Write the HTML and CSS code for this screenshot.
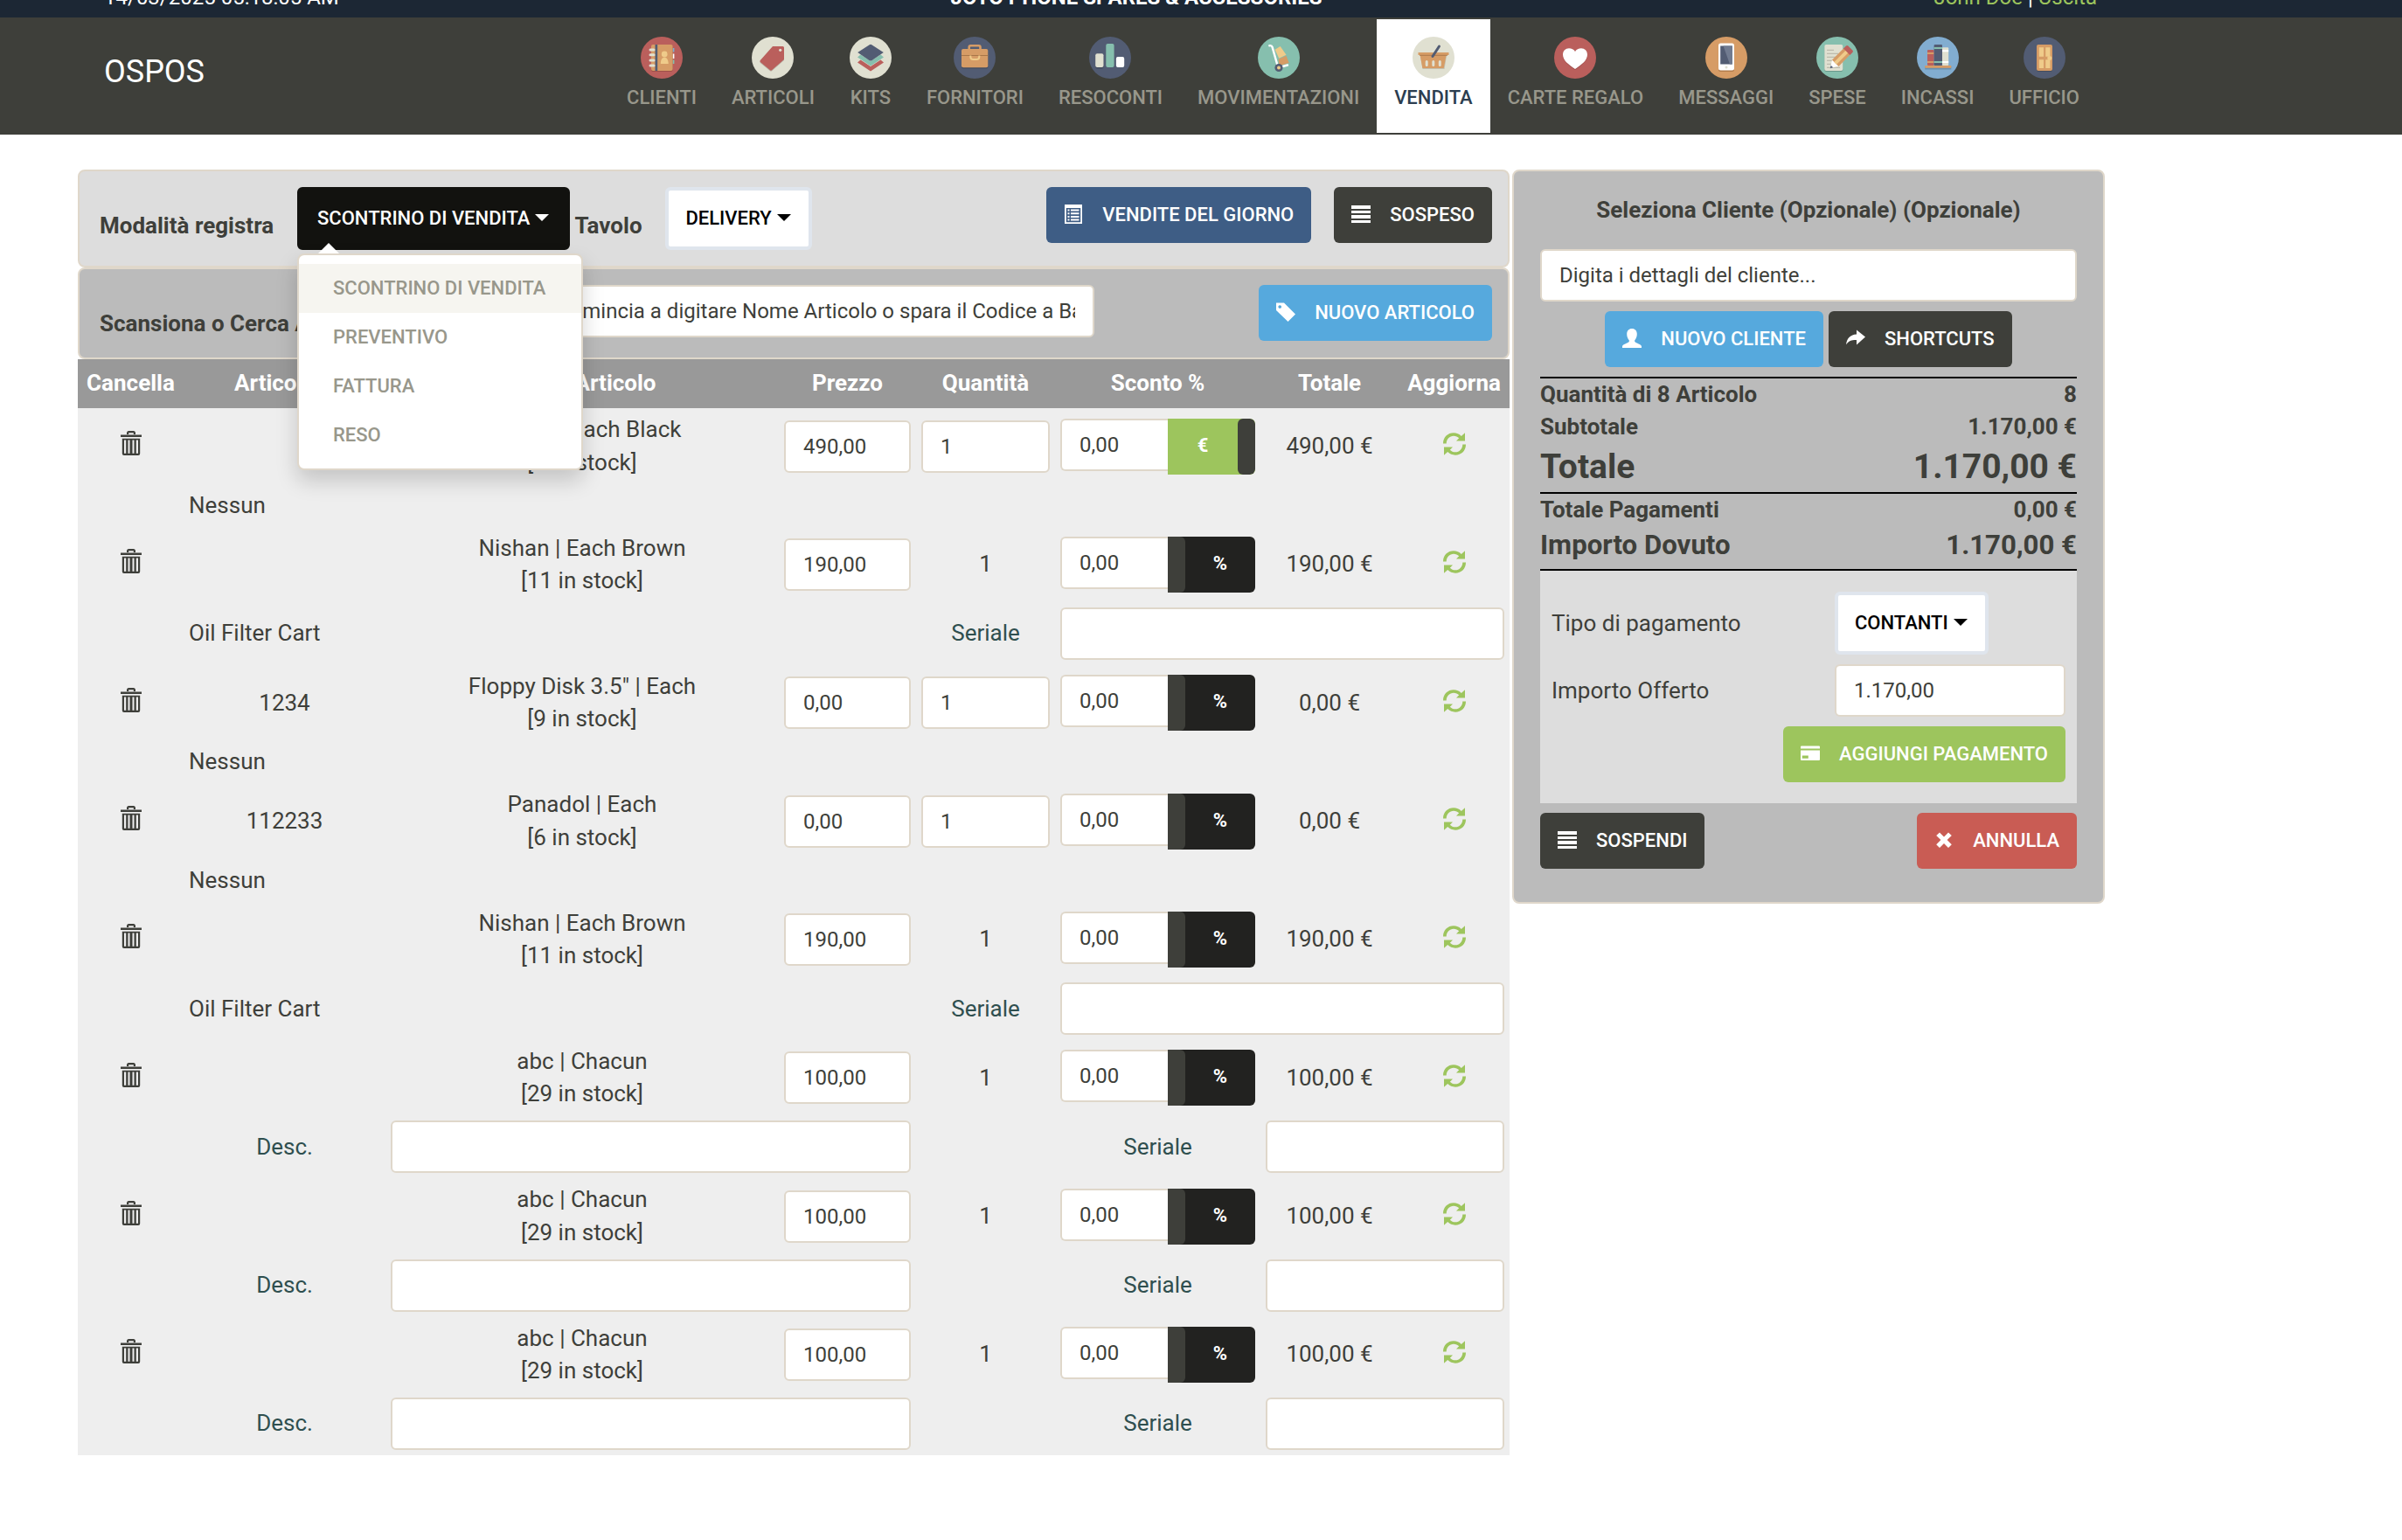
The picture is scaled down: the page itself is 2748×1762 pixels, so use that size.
FILE: index.html
```html
<!DOCTYPE html>
<html lang="it">
<head>
<meta charset="utf-8">
<title>OSPOS</title>
<link rel="stylesheet" href="styles.css">
</head>
<body>
<svg class="defs" width="0" height="0" aria-hidden="true">
  <symbol id="trash" viewBox="0 0 24 28">
    <path d="M0 4.6h24v2.3H0zM7 5V2.6Q7 0 9.400 0h5.200Q17 0 17 2.600V5h-2.200V2.300H9.200V5zM1.800 8.700h20.400V26q0 2-2 2H3.800q-2 0-2-2zM4 10.500v15.300h2.200V10.500zm4.500 0v15.300h2V10.500zm5 0v15.300h2V10.500zm4.300 0v15.300H20V10.500z" fill-rule="evenodd"/>
  </symbol>
  <symbol id="refresh" viewBox="0 0 26 26">
    <path d="M0 12.500C0 5 5.500.3 12 .3c3.400 0 6.500 1.400 8.800 3.600L25 .2V9.500H15l3.200-3.200C16.500 4.600 14.500 3.700 12 3.700c-4.500 0-8.300 3.600-8.300 8.800zM26 13.500c0 7.500-5.500 12.200-12 12.200-3.400 0-6.500-1.400-8.800-3.600L1 25.800V16.500h10l-3.200 3.200c1.700 1.700 3.700 2.600 6.200 2.600 4.500 0 8.300-3.600 8.300-8.800z"/>
  </symbol>
  <symbol id="list" viewBox="0 0 22 22">
    <path d="M0 1h22v4H0zM0 7h22v3H0zM0 12h22v4H0zM0 18h22v3H0z"/>
  </symbol>
  <symbol id="list-alt" viewBox="0 0 22 22">
    <path d="M1 0h20v22H1zM2.800 4v16.200h16.400V4z" fill-rule="evenodd"/>
    <path d="M4.500 5.500h2v2h-2zM8 5.500h9.500v2H8zM4.500 9.200h2v2h-2zM8 9.200h9.500v2H8zM4.500 12.900h2v2h-2zM8 12.900h9.500v2H8zM4.500 16.600h2v2h-2zM8 16.600h9.500v2H8z"/>
  </symbol>
  <symbol id="tag" viewBox="0 0 22 22">
    <path d="M0 0.500H9L22 13.500L13.500 22L0 9zM4.200 3.200a1.800 1.800 0 1 0 .01 0z" fill-rule="evenodd"/>
  </symbol>
  <symbol id="user" viewBox="0 0 22 22">
    <path d="M11 0c3.500 0 5.800 2.500 5.800 6.200 0 3-1.200 5.600-2.600 7v1.800c1.500 1.500 7.800 3 7.800 5.500V22H0v-1.500c0-2.500 6.300-4 7.800-5.500v-1.800c-1.400-1.400-2.600-4-2.600-7C5.200 2.500 7.500 0 11 0z"/>
  </symbol>
  <symbol id="share" viewBox="0 0 22 22">
    <path d="M12 1.500L22 9.500L12 18.500V13C7 12.800 3 13.800 0 18.300C1 10.500 5 7 12 6.500z"/>
  </symbol>
  <symbol id="card" viewBox="0 0 22 22">
    <path d="M1 2.500h20q1 0 1 1V5.500H0V3.500q0-1 1-1zM0 7.500h22v10.500q0 1-1 1H1q-1 0-1-1zM1.800 13.500v3.300h7v-3.300z" fill-rule="evenodd"/>
  </symbol>
  <symbol id="cross" viewBox="0 0 22 22">
    <path d="M6 2.500L11 7.500L16 2.500L19.800 6L14.600 11L19.800 16.300L16 20L11 14.900L6 20L2.200 16.300L7.400 11L2.200 6z"/>
  </symbol>
</svg>

<div class="topbar">
  <span>14/03/2025 05:18:05 AM</span>
  <strong>JOTO PHONE SPARES &amp; ACCESSORIES</strong>
  <span><a href="#">John Doe</a> | <a href="#">Uscita</a></span>
</div>

<nav class="navbar">
  <a class="brand" href="#">OSPOS</a>
  <ul class="modules">
    <li><svg viewBox="0 0 48 48"><circle cx="24" cy="24" r="24" fill="#ba5f5c"/><path d="M36 13h2.400v4.500H36z" fill="#7eaed0"/><path d="M36 19.500h2.400V25H36z" fill="#fff"/><path d="M36 26.500h2.400V31H36z" fill="#86bfae"/><rect x="12" y="10" width="24.600" height="30" rx="2" fill="#9e5148"/><rect x="12" y="9" width="24.600" height="30" rx="2" fill="#d69c66"/><path d="M16.500 9h2.700v30h-2.700z" fill="#525c73"/><path d="M11 15h4M11 20.800h4M11 27h4M11 33h4" stroke="#e0e0d1" stroke-width="3" stroke-linecap="round"/><circle cx="27.200" cy="20" r="3.400" fill="#efcb8a"/><path d="M22.800 31c0-4.500 1.500-7.300 4.400-7.300s4.500 2.800 4.500 7.300z" fill="#efcb8a"/></svg><span>Clienti</span></li>
    <li><svg viewBox="0 0 48 48"><circle cx="24" cy="24" r="24" fill="#e0e0d1"/><path d="M24 12h11.500q1.500 0 1.500 1.500V27L23 39.300q-1 .9-2 0L9.800 30q-.8-1 0-2z" fill="#b9b4a7"/><path d="M24 11h11.500q1.500 0 1.500 1.500V26L23 38.300q-1 .9-2 0L9.800 29q-.8-1 0-2z" fill="#ba5f5c"/><circle cx="32.700" cy="15.300" r="1.600" fill="#e0e0d1"/></svg><span>Articoli</span></li>
    <li><svg viewBox="0 0 48 48"><circle cx="24" cy="24" r="24" fill="#e0e0d1"/><path d="M9 29.500l3.500-3L24 34l11.500-7.500 3.500 3L24 39.500z" fill="#ba5f5c"/><path d="M9 23.500l3.500-3L24 28l11.500-7.500 3.500 3-15 10z" fill="#86bfae"/><path d="M22.700 9.200q1.300-.8 2.600 0L38.800 18 25.300 27.200q-1.300.8-2.600 0L9.200 18z" fill="#525c73"/></svg><span>Kits</span></li>
    <li><svg viewBox="0 0 48 48"><circle cx="24" cy="24" r="24" fill="#525c73"/><rect x="9" y="15.500" width="30.300" height="21" rx="2" fill="#434b5e"/><path d="M17.700 15v-3q0-1.700 1.700-1.700h9.400q1.700 0 1.700 1.700v3" fill="none" stroke="#d69c66" stroke-width="2.600"/><rect x="9" y="14" width="30.300" height="21.300" rx="2" fill="#d69c66"/><path d="M9 21.500h30.300" stroke="#a87648"/><path d="M19.300 21.500v1.500q0 3 3 3h4q3 0 3-3v-1.500" fill="none" stroke="#efcb8a" stroke-width="2"/></svg><span>Fornitori</span></li>
    <li><svg viewBox="0 0 48 48"><circle cx="24" cy="24" r="24" fill="#525c73"/><rect x="7.200" y="19.500" width="9.300" height="17" rx="2" fill="#434b5e"/><rect x="7.200" y="19.300" width="9.300" height="15.700" rx="2" fill="#e0e0d1"/><rect x="19.300" y="8" width="9.300" height="27" rx="2" fill="#86bfae"/><rect x="30.900" y="23" width="9.300" height="12" rx="2" fill="#fff"/></svg><span>Resoconti</span></li>
    <li><svg viewBox="0 0 48 48"><circle cx="24" cy="24" r="24" fill="#86bfae"/><path d="M19.600 14.700L25.700 11l6.800 9.700-8.200 4z" fill="#efcb8a"/><path d="M23.500 25.700l9-4 3.200 8.300-11.100 3.300z" fill="#d69c66"/><path d="M13.300 10.200q2.700-.5 3.200 1.500L22.600 33M25 35l9-2.500" fill="none" stroke="#fff" stroke-width="2.400" stroke-linecap="round"/><circle cx="24" cy="35.500" r="4.600" fill="#525c73"/><circle cx="24" cy="35.500" r="2" fill="#efcb8a"/></svg><span>Movimentazioni</span></li>
    <li class="active"><svg viewBox="0 0 48 48"><circle cx="24" cy="24" r="24" fill="#e0e0d1"/><path d="M9 22h30l-2.500 15H11.500z" fill="#c4bfae"/><path d="M8.600 21h30l-2.900 15H11.400z" fill="#d69c66"/><path d="M6.500 18h35v3h-35z" fill="#d69c66"/><path d="M8 21.300h32" stroke="#a87648" stroke-width=".9"/><path d="M16.200 28.600v4M23.800 28.600v4M31.300 28.600v4" stroke="#e0e0d1" stroke-width="3" stroke-linecap="round"/><path d="M30.500 11l-7.500 11.500" stroke="#525c73" stroke-width="3" stroke-linecap="round"/></svg><span>Vendita</span></li>
    <li><svg viewBox="0 0 48 48"><circle cx="24" cy="24" r="24" fill="#ba5f5c"/><path d="M24 38C16 32.500 10 28 10 21c0-4.500 3-7.600 7-7.600 3 0 5.500 1.200 7 3.800 1.500-2.600 4-3.800 7-3.800 4 0 7 3.100 7 7.600 0 7-6 11.500-14 17z" fill="#9e4d4b"/><path d="M24 37C16 31.500 10 27 10 20.500c0-4.300 3-7.300 7-7.300 3 0 5.500 1.200 7 3.800 1.500-2.600 4-3.800 7-3.800 4 0 7 3 7 7.300C38 27 32 31.500 24 37z" fill="#fff"/></svg><span>Carte Regalo</span></li>
    <li><svg viewBox="0 0 48 48"><circle cx="24" cy="24" r="24" fill="#d69c66"/><rect x="15" y="9" width="18" height="31" rx="2.500" fill="#b27c4c"/><rect x="15" y="7.500" width="18" height="31" rx="2.500" fill="#fff"/><path d="M17.200 10.500h13.600v21H17.200z" fill="#525c73"/><path d="M20.500 10.500h10.300v21H28z" fill="#717b90"/><circle cx="24" cy="35" r="1.500" fill="#e0e0d1"/></svg><span>Messaggi</span></li>
    <li><svg viewBox="0 0 48 48"><circle cx="24" cy="24" r="24" fill="#86bfae"/><rect x="9.300" y="10" width="21" height="30" rx="2" fill="#6b998b"/><rect x="9.300" y="9" width="21" height="30" rx="2" fill="#e0e0d1"/><path d="M12 15.300h8M12 19.300h13M12 23.300h12M12 27.300h8M12 31.300h6M12 35.300h15" stroke="#b4b2a4"/><path d="M16 36l2-9.500 7.500 7z" fill="#fff"/><path d="M15.800 36.300l.8-3.600 2.600 2.500z" fill="#525c73"/><path d="M18 26.500L32 12.500l7.500 7L25.500 34z" fill="#d69c66"/><path d="M20.300 29L34.500 14.800l2.800 2.600L23 31.700z" fill="#efcb8a"/><path d="M31 13.500l3-3q1.200-1.200 2.400 0l5 5q1.200 1.200 0 2.400l-3 3z" fill="#ba5f5c"/></svg><span>Spese</span></li>
    <li><svg viewBox="0 0 48 48"><circle cx="24" cy="24" r="24" fill="#82add0"/><path d="M9.300 34h30v3.500h-30z" fill="#6990b0"/><rect x="12" y="15" width="7.600" height="18" rx="1" fill="#ba5f5c"/><path d="M12 18h7.600v2H12zM12 28h7.600v2H12z" fill="#d69c66"/><rect x="29" y="12.300" width="7.200" height="20.700" rx="1" fill="#e0e0d1"/><path d="M29 15.300h7.200v2H29zM29 28h7.200v2H29z" fill="#fff"/><rect x="19.600" y="9" width="9.400" height="24" rx="1" fill="#525c73"/><path d="M19.600 12h9.400v2h-9.400zM19.600 28h9.400v2h-9.400z" fill="#86bfae"/><path d="M9.300 33h30v2.800h-30z" fill="#d69c66"/></svg><span>Incassi</span></li>
    <li><svg viewBox="0 0 48 48"><circle cx="24" cy="24" r="24" fill="#525c73"/><rect x="15" y="10" width="18" height="30" rx="2" fill="#434b5e"/><rect x="15" y="9" width="18" height="30" rx="2" fill="#d69c66"/><path d="M17.800 12.300H23v10.400h-5.200zM25.300 12.300h5.200v10.400h-5.200zM17.800 26.300H23V36h-5.200zM25.300 26.300h5.200V36h-5.200z" fill="#efcb8a"/><circle cx="29.800" cy="24.500" r="2.500" fill="#efcb8a"/></svg><span>Ufficio</span></li>
  </ul>
</nav>

<main class="page">
  <section class="register">
    <div class="bar bar-mode">
      <label class="mode-label">Modalità registra</label>
      <div class="dropdown">
        <button class="select select-open">Scontrino di vendita<i class="caret"></i></button>
        <ul class="menu">
          <li class="selected">Scontrino di vendita</li>
          <li>Preventivo</li>
          <li>Fattura</li>
          <li>Reso</li>
        </ul>
      </div>
      <label class="table-label">Tavolo</label>
      <button class="select">Delivery<i class="caret"></i></button>
      <div class="actions">
        <button class="btn blue"><svg><use href="#list-alt"/></svg>Vendite del giorno</button>
        <button class="btn dark"><svg><use href="#list"/></svg>Sospeso</button>
      </div>
    </div>
    <div class="bar bar-find">
      <label class="find-label">Scansiona o Cerca Articolo</label>
      <input class="field find" value="Comincia a digitare Nome Articolo o spara il Codice a Barre...">
      <div class="actions">
        <button class="btn sky"><svg><use href="#tag"/></svg>Nuovo articolo</button>
      </div>
    </div>

    <table class="cart">
      <colgroup><col class="c-del"><col class="c-num"><col class="c-name"><col class="c-price"><col class="c-qty"><col class="c-disc"><col class="c-total"><col class="c-upd"></colgroup>
      <thead>
        <tr><th>Cancella</th><th>Articolo #</th><th>Nome Articolo</th><th>Prezzo</th><th>Quantità</th><th>Sconto %</th><th>Totale</th><th>Aggiorna</th></tr>
      </thead>
      <tbody>
        <tr class="item"><td><svg class="trash"><use href="#trash"/></svg></td><td></td><td>Nishan | Each Black<br>[9 in stock]</td><td><input class="field" value="490,00"></td><td><input class="field" value="1"></td><td><div class="discount"><input class="field" value="0,00"><span class="toggle on"><b>€</b><i></i></span></div></td><td>490,00 €</td><td><svg class="refresh"><use href="#refresh"/></svg></td></tr>
        <tr><td></td><td class="note" colspan="7">Nessun</td></tr>

        <tr class="item"><td><svg class="trash"><use href="#trash"/></svg></td><td></td><td>Nishan | Each Brown<br>[11 in stock]</td><td><input class="field" value="190,00"></td><td>1</td><td><div class="discount"><input class="field" value="0,00"><span class="toggle"><i></i><b>%</b></span></div></td><td>190,00 €</td><td><svg class="refresh"><use href="#refresh"/></svg></td></tr>
        <tr><td></td><td class="note" colspan="3">Oil Filter Cart</td><td class="key">Seriale</td><td colspan="3"><input class="field"></td></tr>

        <tr class="item"><td><svg class="trash"><use href="#trash"/></svg></td><td>1234</td><td>Floppy Disk 3.5" | Each<br>[9 in stock]</td><td><input class="field" value="0,00"></td><td><input class="field" value="1"></td><td><div class="discount"><input class="field" value="0,00"><span class="toggle"><i></i><b>%</b></span></div></td><td>0,00 €</td><td><svg class="refresh"><use href="#refresh"/></svg></td></tr>
        <tr><td></td><td class="note" colspan="7">Nessun</td></tr>

        <tr class="item"><td><svg class="trash"><use href="#trash"/></svg></td><td>112233</td><td>Panadol | Each<br>[6 in stock]</td><td><input class="field" value="0,00"></td><td><input class="field" value="1"></td><td><div class="discount"><input class="field" value="0,00"><span class="toggle"><i></i><b>%</b></span></div></td><td>0,00 €</td><td><svg class="refresh"><use href="#refresh"/></svg></td></tr>
        <tr><td></td><td class="note" colspan="7">Nessun</td></tr>

        <tr class="item"><td><svg class="trash"><use href="#trash"/></svg></td><td></td><td>Nishan | Each Brown<br>[11 in stock]</td><td><input class="field" value="190,00"></td><td>1</td><td><div class="discount"><input class="field" value="0,00"><span class="toggle"><i></i><b>%</b></span></div></td><td>190,00 €</td><td><svg class="refresh"><use href="#refresh"/></svg></td></tr>
        <tr><td></td><td class="note" colspan="3">Oil Filter Cart</td><td class="key">Seriale</td><td colspan="3"><input class="field"></td></tr>

        <tr class="item"><td><svg class="trash"><use href="#trash"/></svg></td><td></td><td>abc | Chacun<br>[29 in stock]</td><td><input class="field" value="100,00"></td><td>1</td><td><div class="discount"><input class="field" value="0,00"><span class="toggle"><i></i><b>%</b></span></div></td><td>100,00 €</td><td><svg class="refresh"><use href="#refresh"/></svg></td></tr>
        <tr><td></td><td class="key">Desc.</td><td colspan="2"><input class="field"></td><td></td><td class="key">Seriale</td><td colspan="2"><input class="field"></td></tr>

        <tr class="item"><td><svg class="trash"><use href="#trash"/></svg></td><td></td><td>abc | Chacun<br>[29 in stock]</td><td><input class="field" value="100,00"></td><td>1</td><td><div class="discount"><input class="field" value="0,00"><span class="toggle"><i></i><b>%</b></span></div></td><td>100,00 €</td><td><svg class="refresh"><use href="#refresh"/></svg></td></tr>
        <tr><td></td><td class="key">Desc.</td><td colspan="2"><input class="field"></td><td></td><td class="key">Seriale</td><td colspan="2"><input class="field"></td></tr>

        <tr class="item"><td><svg class="trash"><use href="#trash"/></svg></td><td></td><td>abc | Chacun<br>[29 in stock]</td><td><input class="field" value="100,00"></td><td>1</td><td><div class="discount"><input class="field" value="0,00"><span class="toggle"><i></i><b>%</b></span></div></td><td>100,00 €</td><td><svg class="refresh"><use href="#refresh"/></svg></td></tr>
        <tr><td></td><td class="key">Desc.</td><td colspan="2"><input class="field"></td><td></td><td class="key">Seriale</td><td colspan="2"><input class="field"></td></tr>
      </tbody>
    </table>
  </section>

  <aside class="sale">
    <h2>Seleziona Cliente (Opzionale) (Opzionale)</h2>
    <input class="field" value="Digita i dettagli del cliente...">
    <div class="customer-actions">
      <button class="btn sky"><svg><use href="#user"/></svg>Nuovo cliente</button>
      <button class="btn dark"><svg><use href="#share"/></svg>Shortcuts</button>
    </div>
    <dl class="totals">
      <div><dt>Quantità di 8 Articolo</dt><dd>8</dd></div>
      <div><dt>Subtotale</dt><dd>1.170,00 €</dd></div>
      <div class="grand"><dt>Totale</dt><dd>1.170,00 €</dd></div>
    </dl>
    <dl class="totals">
      <div><dt>Totale Pagamenti</dt><dd>0,00 €</dd></div>
      <div class="due"><dt>Importo Dovuto</dt><dd>1.170,00 €</dd></div>
    </dl>
    <div class="payment">
      <div class="line"><span>Tipo di pagamento</span><button class="select">Contanti<i class="caret"></i></button></div>
      <div class="line amount"><span>Importo Offerto</span><input class="field" value="1.170,00"></div>
      <button class="btn green"><svg><use href="#card"/></svg>Aggiungi pagamento</button>
    </div>
    <div class="sale-actions">
      <button class="btn dark"><svg><use href="#list"/></svg>Sospendi</button>
      <button class="btn red"><svg><use href="#cross"/></svg>Annulla</button>
    </div>
  </aside>
</main>
</body>
</html>
```

FILE: styles.css
```css
* { box-sizing: border-box; }

body {
  margin: 0;
  background: #fff;
  color: #3e3f3a;
  font: 26px/37.14px Roboto, "Liberation Sans", sans-serif;
}

ul, dl, dd, h2 { margin: 0; padding: 0; list-style: none; }
.defs { display: block; }
button, input { font-family: inherit; }

/* Top strip */
.topbar {
  display: flex;
  justify-content: space-between;
  align-items: flex-end;
  height: 20px;
  padding: 0 349px 4px 119px;
  overflow: hidden;
  background: #1c2734;
  color: #fff;
  font-size: 24px;
  white-space: nowrap;
}
.topbar a { color: #9dc55d; text-decoration: none; }

/* Module navigation */
.navbar {
  display: flex;
  justify-content: space-between;
  height: 134px;
  padding: 2px 349px 2px 119px;
  background: #3e3f3a;
}
.brand {
  padding-top: 40px;
  color: #fff;
  font-size: 36px;
  line-height: 40px;
  text-decoration: none;
}
.modules { display: flex; }
.modules li {
  display: flex;
  flex-direction: column;
  align-items: center;
  gap: 10px;
  padding: 20px 20px 0;
  color: #98978b;
  font-size: 22px;
  font-weight: 500;
  line-height: 24px;
  text-transform: uppercase;
}
.modules svg { width: 48px; height: 48px; }
.modules .active { background: #fff; color: #2c3e50; }

.page {
  display: flex;
  align-items: flex-start;
  gap: 3px;
  padding: 40px 0 0 89px;
}

/* Shared controls */
.btn {
  display: inline-flex;
  align-items: center;
  height: 64px;
  padding: 0 20px;
  border: 0;
  border-radius: 6px;
  color: #fff;
  font-size: 22px;
  font-weight: 500;
  line-height: 32px;
  text-transform: uppercase;
  white-space: nowrap;
}
.btn svg { width: 22px; height: 22px; margin: -2px 22px 0 0; fill: currentColor; }
.blue { background: #3e5d85; }
.dark { background: #3e3f3a; }
.sky { background: #56a9dd; }
.green { background: #9dc55d; }
.red { background: #c95c54; }

.select {
  display: inline-flex;
  align-items: center;
  height: 72px;
  padding: 0 20px 2px 19px;
  border: 4px solid #dfe5ed;
  border-radius: 6px;
  background: #fff;
  color: #000;
  font-size: 22px;
  font-weight: 500;
  text-transform: uppercase;
  white-space: nowrap;
}
.select-open { border-color: #12120f; background: #12120f; color: #fff; }
.caret {
  margin-left: 6px;
  border: 8px solid transparent;
  border-top-color: currentColor;
  border-bottom: 0;
}

.field {
  display: block;
  width: 100%;
  height: 60px;
  padding: 0 20px;
  border: 2px solid #dfd7ca;
  border-radius: 6px;
  outline: 0;
  background: #fff;
  color: #3e3f3a;
  font-size: 24px;
}

/* Register */
.register { width: 1638px; }
.bar {
  display: flex;
  align-items: flex-start;
  padding: 18px 18px 0 23px;
  border: 2px solid #dfd7ca;
  border-radius: 8px;
  font-weight: 700;
}
.bar-mode { height: 112px; background: #ddd; }
.bar-find { height: 104.700px; background: #bbb; }
.bar label { flex: none; margin-top: 25.500px; white-space: nowrap; }
.mode-label { width: 226px; }
.table-label { width: 109px; padding-left: 5px; }
.find-label { width: 501px; }
.find { width: 637px; }
.actions { display: flex; gap: 26px; margin-left: auto; }

.dropdown { position: relative; }
.menu {
  position: absolute;
  z-index: 2;
  top: 76px;
  left: 0;
  width: 327px;
  padding: 10px 0;
  border: 2px solid #dfd7ca;
  border-radius: 8px;
  background: #fff;
  box-shadow: 0 12px 24px rgba(0, 0, 0, .175);
  color: #98978b;
  font-size: 22px;
  font-weight: 500;
  text-transform: uppercase;
}
.menu::before {
  content: "";
  position: absolute;
  top: -14px;
  left: 22px;
  border: 12px solid transparent;
  border-top: 0;
  border-bottom-color: #fff;
}
.menu li { height: 56px; padding-left: 39px; line-height: 55px; }
.menu .selected { background: #f6f5f0; }

.cart {
  width: 1638px;
  table-layout: fixed;
  border-collapse: collapse;
  background: #eee;
  text-align: center;
}
.c-del { width: 121px; }
.c-num { width: 231px; }
.c-name { width: 450px; }
.c-price { width: 157px; }
.c-qty { width: 159px; }
.c-disc { width: 235px; }
.c-total { width: 158px; }
.c-upd { width: 127px; }
.cart th {
  height: 56.700px;
  padding: 0;
  background: #999;
  color: #fff;
  font-weight: 700;
}
.cart td { padding: 6px; }
.cart .item td { height: 86.280px; padding: 0 6px; }
.cart .note { text-align: left; }
.cart .key { color: #2f4f4f; }
.trash { display: block; width: 24px; height: 28px; margin: -7px auto 0; fill: #3e3f3a; }
.refresh { display: block; width: 26px; height: 26px; margin: -5px auto 0; fill: #9dc55d; }

.discount { display: flex; align-items: flex-start; }
.discount .field { width: 123px; border-right: 0; border-radius: 6px 0 0 6px; }
.toggle {
  display: flex;
  width: 100px;
  height: 64px;
  border-radius: 0 6px 6px 0;
  overflow: hidden;
  background: linear-gradient(#3e3f3a, #3e3f3a) 0 0 / 12px 100% no-repeat #222220;
  color: #fff;
  font-size: 22px;
  line-height: 62px;
}
.toggle b { width: 80px; }
.toggle i { width: 20px; background: #3e3f3a; border-radius: 0 6px 6px 0; }
.toggle.on { background: #9dc55d; }
.toggle.on i { border-radius: 6px; }

/* Sale summary */
.sale {
  width: 678px;
  height: 840px;
  padding: 26px 30px 0;
  border: 2px solid #dfd7ca;
  border-radius: 8px;
  background: #bbb;
}
.sale h2 { margin-bottom: 25.600px; font-size: 26px; font-weight: 700; text-align: center; }
.customer-actions { display: flex; justify-content: center; gap: 6px; margin: 11px 0; }

.totals { border-top: 2px solid #000; font-weight: 700; }
.totals div { display: flex; justify-content: space-between; }
.totals .grand { height: 55.700px; font-size: 39px; line-height: 55px; }
.totals .due { height: 49.500px; font-size: 31.200px; line-height: 43px; }

.payment {
  display: flex;
  flex-direction: column;
  height: 268px;
  padding: 24px 13px 0;
  border-top: 2px solid #000;
  background: #ddd;
}
.line { display: flex; align-items: center; }
.line span { width: 324px; }
.line .field { width: 264px; }
.amount { margin: 11px 0; }
.payment .green { align-self: flex-end; }
.sale-actions { display: flex; justify-content: space-between; margin-top: 11px; }
```
